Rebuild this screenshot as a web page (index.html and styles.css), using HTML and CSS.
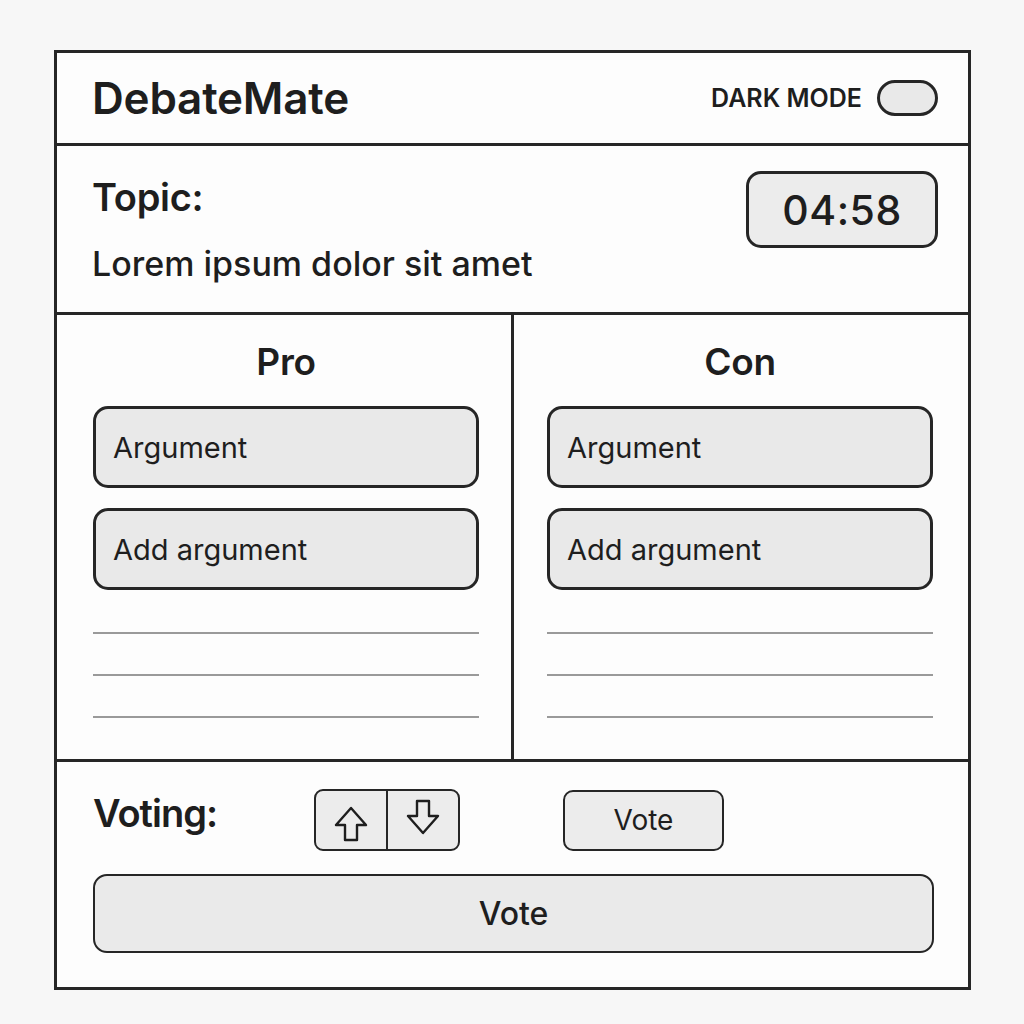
FILE: index.html
```html
<!DOCTYPE html>
<html>
<head>
<meta charset="utf-8">
<link rel="stylesheet" href="styles.css">
</head>
<body>
<div class="frame">
  <header class="header">
    <div class="brand">DebateMate</div>
    <div class="mode">
      <span class="mode-label">DARK MODE</span>
      <span class="toggle"></span>
    </div>
  </header>
  <section class="topic">
    <div class="topic-text">
      <div class="topic-label">Topic:</div>
      <div class="topic-body">Lorem ipsum dolor sit amet</div>
    </div>
    <div class="timer">04:58</div>
  </section>
  <section class="sides">
    <div class="side">
      <div class="side-title">Pro</div>
      <div class="field">Argument</div>
      <div class="field">Add argument</div>
      <div class="rule"></div>
      <div class="rule"></div>
      <div class="rule"></div>
    </div>
    <div class="side side-right">
      <div class="side-title">Con</div>
      <div class="field">Argument</div>
      <div class="field">Add argument</div>
      <div class="rule"></div>
      <div class="rule"></div>
      <div class="rule"></div>
    </div>
  </section>
  <section class="voting">
    <div class="vote-row">
      <div class="vote-label">Voting:</div>
      <div class="arrows">
        <button class="arrow">
          <svg width="36" height="38" viewBox="0 0 36 38"><path d="M18 3 L33 20 L24 20 L24 35 L12 35 L12 20 L3 20 Z" fill="none" stroke="#1e1e1e" stroke-width="2.4" stroke-linejoin="round"/></svg>
        </button>
        <button class="arrow arrow-down">
          <svg width="36" height="38" viewBox="0 0 36 38"><path d="M18 35 L33 18 L24 18 L24 3 L12 3 L12 18 L3 18 Z" fill="none" stroke="#1e1e1e" stroke-width="2.4" stroke-linejoin="round"/></svg>
        </button>
      </div>
      <button class="vote-small">Vote</button>
    </div>
    <button class="vote-big">Vote</button>
  </section>
</div>
</body>
</html>
```
FILE: styles.css
```css
* { box-sizing: border-box; }
html, body { margin: 0; padding: 0; }
body {
  background: #f7f7f7;
  font-family: Inter, "Noto Sans", sans-serif;
  color: #1e1e1e;
  padding: 50px 0 0 54px;
}
.frame {
  width: 917px;
  height: 940px;
  background: #fdfdfd;
  border: 3px solid #262626;
  display: flex;
  flex-direction: column;
}
.header {
  height: 93px;
  border-bottom: 3px solid #262626;
  display: flex;
  align-items: center;
  justify-content: space-between;
  padding: 0 30px 0 35px;
}
.brand {
  font-size: 44px;
  font-weight: 600;
  letter-spacing: -0.2px;
}
.mode {
  display: flex;
  align-items: center;
  gap: 15px;
}
.mode-label {
  font-size: 25px;
  font-weight: 600;
  letter-spacing: 0px;
}
.toggle {
  width: 61px;
  height: 36px;
  border: 3px solid #262626;
  border-radius: 18px;
  background: #e9e9e9;
}
.topic {
  height: 169px;
  border-bottom: 3px solid #262626;
  display: flex;
  justify-content: space-between;
  padding: 28px 30px 0 35px;
}
.topic-label {
  font-size: 38px;
  font-weight: 600;
  line-height: 46px;
  letter-spacing: -0.3px;
}
.topic-body {
  font-size: 34px;
  font-weight: 500;
  line-height: 40px;
  margin-top: 24px;
}
.timer {
  width: 192px;
  height: 77px;
  margin-top: -3px;
  border: 3px solid #262626;
  border-radius: 15px;
  background: #ececec;
  font-size: 41px;
  font-weight: 500;
  display: flex;
  align-items: center;
  justify-content: center;
  letter-spacing: 0.5px;
}
.sides {
  height: 447px;
  border-bottom: 3px solid #262626;
  display: flex;
}
.side {
  flex: 1;
  padding: 25px 32px 0 36px;
  display: flex;
  flex-direction: column;
}
.side-right {
  border-left: 3px solid #262626;
  padding: 25px 35px 0 33px;
}
.side-title {
  text-align: center;
  font-size: 37px;
  font-weight: 600;
  line-height: 44px;
  margin-bottom: 22px;
  letter-spacing: -0.3px;
}
.field {
  height: 82px;
  border: 3px solid #262626;
  border-radius: 15px;
  background: #e9e9e9;
  font-size: 29px;
  padding-left: 17px;
  display: flex;
  align-items: center;
  margin-bottom: 20px;
}
.field + .field { margin-bottom: 42px; }
.rule {
  height: 2px;
  background: #9a9a9a;
  margin-bottom: 40px;
}
.voting {
  flex: 1;
  padding: 27px 35px 0 36px;
}
.vote-row {
  display: flex;
  align-items: center;
  height: 62px;
}
.vote-label {
  font-size: 38px;
  font-weight: 600;
  letter-spacing: -1px;
  width: 221px;
  margin-top: -14px;
}
.arrows {
  display: flex;
  width: 146px;
  height: 62px;
  border: 2.5px solid #262626;
  border-radius: 9px;
  background: #ececec;
  overflow: hidden;
}
.arrow {
  flex: 1;
  border: none;
  background: transparent;
  padding: 0;
  display: flex;
  align-items: center;
  justify-content: center;
}
.arrow svg { margin-top: 8px; }
.arrow-down svg { margin-top: -6px; }
.arrow-down { border-left: 2px solid #262626; }
.vote-small {
  margin-left: 103px;
  width: 161px;
  height: 61px;
  border: 2.5px solid #262626;
  border-radius: 10px;
  background: #ececec;
  font-family: inherit;
  font-size: 28px;
  color: #1e1e1e;
}
.vote-big {
  display: block;
  margin-top: 23px;
  width: 841px;
  height: 79px;
  border: 2.5px solid #262626;
  border-radius: 14px;
  background: #eaeaea;
  font-family: inherit;
  font-size: 32px;
  font-weight: 500;
  color: #1e1e1e;
}
```
